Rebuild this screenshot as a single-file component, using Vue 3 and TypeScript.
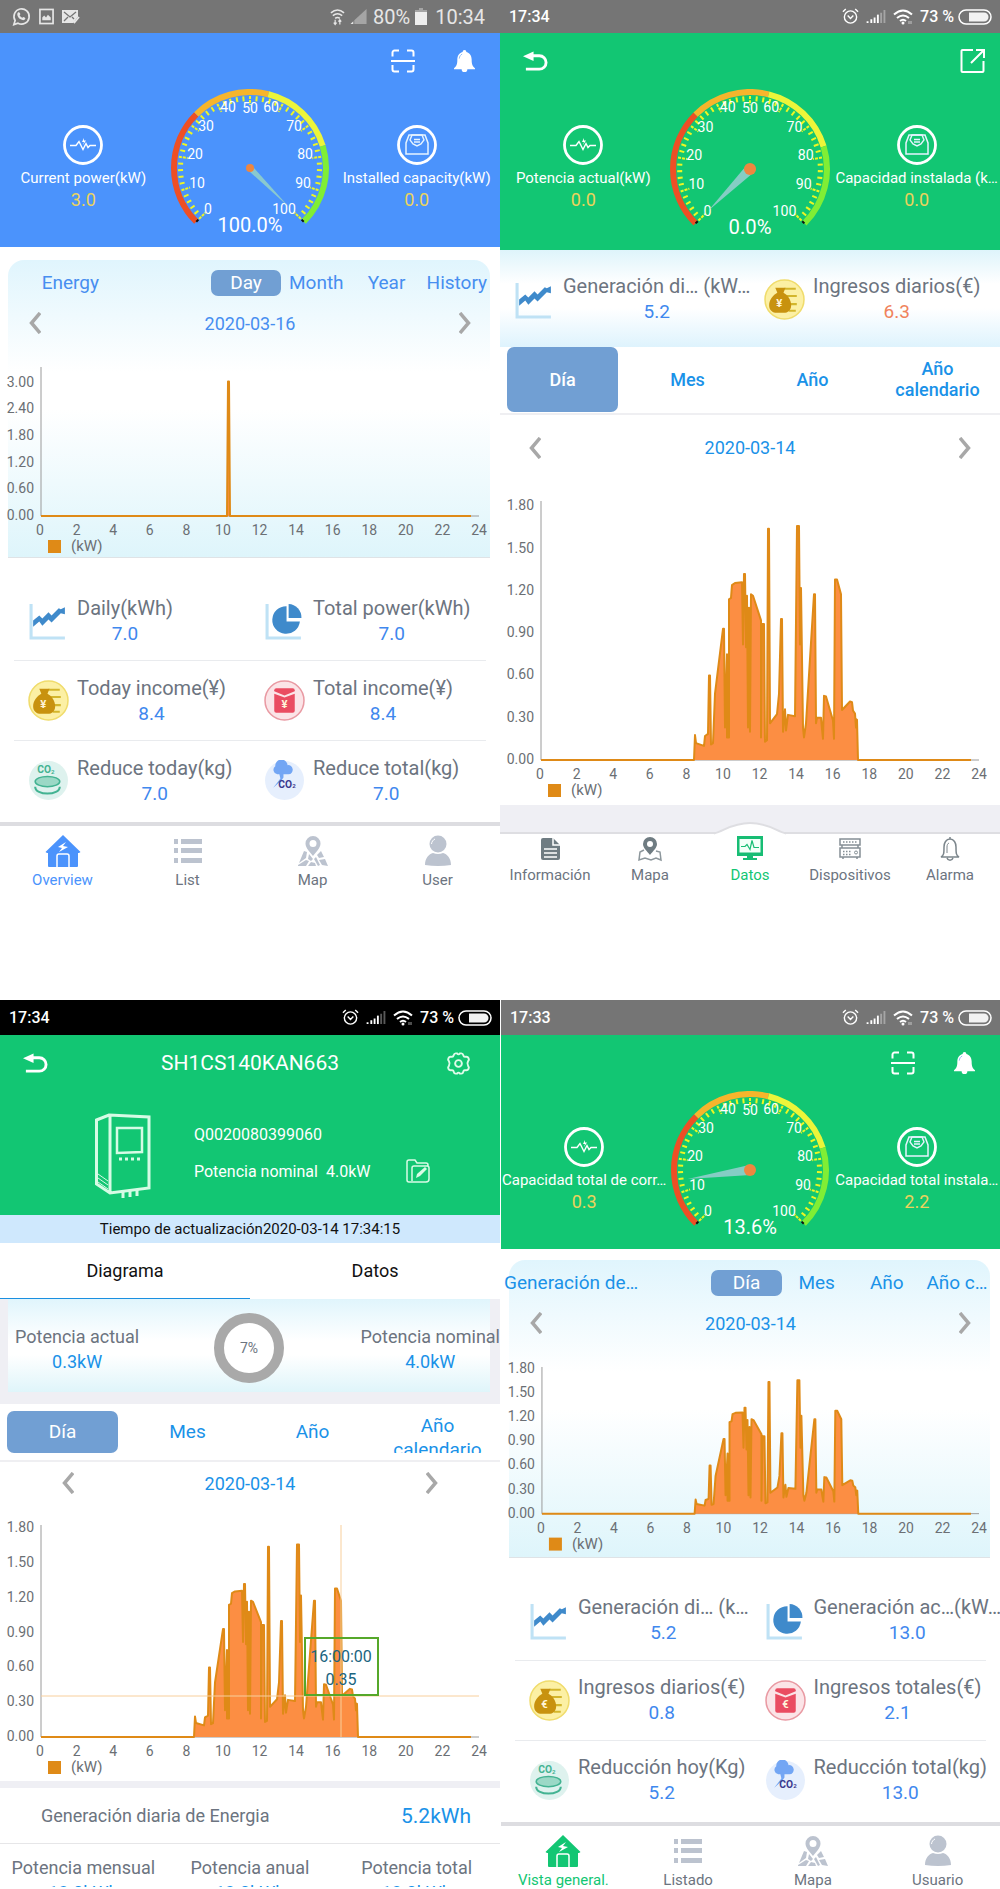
<script setup lang="ts">
interface ChartSpec {
  x: number
  width: number
  height: number
  base: number
  unit: number
  step: number
  digits: string[]
  points: [number, number][]
}
interface Stat { icon: string; sym?: string; label: string; value: string; warm?: boolean }
interface NavItem { icon: string; label: string }
interface GaugeSpec { percent: number; text: string; size: number; hub: number; reach: number }
interface Screen {
  id: string
  kind: 'overview' | 'station' | 'device'
  time: string
  android?: boolean
  gauge?: GaugeSpec
  left?: [string, string]
  right?: [string, string]
  strip?: Stat[]
  energy?: string
  periods: string[]
  date: string
  chart: ChartSpec
  stats?: Stat[]
  nav?: NavItem[]
}

const spike: [number, number][] = [
  [41, 0], [227, 0], [228, 3.03], [229, 3.03], [230, 0], [471, 0],
]
const dayCurve: [number, number][] = [
  [41, 0], [194, 0], [195, 0.177], [196, 0.12], [204, 0.1], [205, 0.17], [208, 0.185], [209, 0.6], [210, 0.6],
  [211, 0.11], [213, 0.12], [215, 0.47], [223, 0.93], [224, 0.93], [225, 0.23], [227, 0.75], [227, 0.16],
  [229, 0.16], [229, 1.14], [231, 1.15], [232, 1.24], [235, 1.255], [242, 1.26], [243, 0.82], [244, 1.32],
  [245, 1.32], [246, 0.8], [247, 1.165], [248, 0.23], [249, 1.08], [250, 0.2], [251, 1.175], [253, 1.165],
  [261, 0.99], [261, 0.16], [262, 0.965], [264, 0.965], [265, 0.13], [267, 0.14], [268, 1.64], [269, 1.64],
  [270, 0.26], [277, 0.325], [279, 0.47], [281, 1.0], [282, 1.0], [283, 0.2], [285, 0.36], [286, 0.21],
  [288, 0.32], [295, 0.31], [297, 1.66], [299, 1.66], [300, 0.82], [301, 1.22], [303, 0.23], [304, 0.16],
  [306, 0.26], [314, 1.175], [315, 1.175], [316, 0.26], [317, 0.3], [321, 0.3], [322, 0.22], [323, 0.15],
  [324, 0.455], [326, 0.45], [333, 0.28], [334, 0.15], [335, 1.28], [337, 1.28], [341, 1.175], [342, 0.355],
  [350, 0.415], [352, 0.41], [353, 0.35], [355, 0.33], [356, 0.23], [356, 0.29], [357, 0.285], [358, 0],
  [471, 0],
]
const dayTicks = ['0.00', '0.30', '0.60', '0.90', '1.20', '1.50', '1.80']

const screens: Screen[] = [
  {
    id: 'blue', kind: 'overview', time: '10:34', android: true,
    gauge: { percent: 100, text: '100.0%', size: 160, hub: 4, reach: 55 },
    left: ['Current power(kW)', '3.0'],
    right: ['Installed capacity(kW)', '0.0'],
    energy: 'Energy',
    periods: ['Day', 'Month', 'Year', 'History'],
    date: '2020-03-16',
    chart: {
      x: 8, width: 482, height: 196, base: 155, unit: 44.4, step: 0.6,
      digits: ['0.00', '0.60', '1.20', '1.80', '2.40', '3.00'], points: spike,
    },
    stats: [
      { icon: 'trend', label: 'Daily(kWh)', value: '7.0' },
      { icon: 'pie', label: 'Total power(kWh)', value: '7.0' },
      { icon: 'bag', sym: '¥', label: 'Today income(¥)', value: '8.4' },
      { icon: 'packet', sym: '¥', label: 'Total income(¥)', value: '8.4' },
      { icon: 'co2day', label: 'Reduce today(kg)', value: '7.0' },
      { icon: 'co2all', label: 'Reduce total(kg)', value: '7.0' },
    ],
    nav: [
      { icon: 'home', label: 'Overview' }, { icon: 'list', label: 'List' },
      { icon: 'map', label: 'Map' }, { icon: 'user', label: 'User' },
    ],
  },
  {
    id: 'station', kind: 'station', time: '17:34',
    gauge: { percent: 0, text: '0.0%', size: 162, hub: 6, reach: 58 },
    left: ['Potencia actual(kW)', '0.0'],
    right: ['Capacidad instalada (k…', '0.0'],
    strip: [
      { icon: 'trend', label: 'Generación di… (kW…', value: '5.2' },
      { icon: 'bag', sym: '¥', label: 'Ingresos diarios(€)', value: '6.3', warm: true },
    ],
    periods: ['Día', 'Mes', 'Año', 'Año calendario'],
    date: '2020-03-14',
    chart: { x: 0, width: 500, height: 310, base: 265, unit: 141, step: 0.3, digits: dayTicks, points: dayCurve },
    nav: [
      { icon: 'doc', label: 'Información' }, { icon: 'pinmap', label: 'Mapa' },
      { icon: 'monitor', label: 'Datos' }, { icon: 'rack', label: 'Dispositivos' },
      { icon: 'belline', label: 'Alarma' },
    ],
  },
  {
    id: 'device', kind: 'device', time: '17:34',
    periods: ['Día', 'Mes', 'Año', 'Año calendario'],
    date: '2020-03-14',
    chart: { x: 0, width: 500, height: 262, base: 218, unit: 116, step: 0.3, digits: dayTicks, points: dayCurve },
  },
  {
    id: 'green', kind: 'overview', time: '17:33',
    gauge: { percent: 13.6, text: '13.6%', size: 160, hub: 6, reach: 63 },
    left: ['Capacidad total de corr…', '0.3'],
    right: ['Capacidad total instala…', '2.2'],
    energy: 'Generación de…',
    periods: ['Día', 'Mes', 'Año', 'Año c…'],
    date: '2020-03-14',
    chart: { x: 8, width: 482, height: 196, base: 153, unit: 80.5, step: 0.3, digits: dayTicks, points: dayCurve },
    stats: [
      { icon: 'trend', label: 'Generación di… (k…', value: '5.2' },
      { icon: 'pie', label: 'Generación ac…(kW…', value: '13.0' },
      { icon: 'bag', sym: '€', label: 'Ingresos diarios(€)', value: '0.8' },
      { icon: 'packet', sym: '€', label: 'Ingresos totales(€)', value: '2.1' },
      { icon: 'co2day', label: 'Reducción hoy(Kg)', value: '5.2' },
      { icon: 'co2all', label: 'Reducción total(kg)', value: '13.0' },
    ],
    nav: [
      { icon: 'home', label: 'Vista general.' }, { icon: 'list', label: 'Listado' },
      { icon: 'map', label: 'Mapa' }, { icon: 'user', label: 'Usuario' },
    ],
  },
]

const hours = Array.from({ length: 13 }, (_, i) => i * 2)
const hourX = (h: number) => 40 + (h * 439) / 24

const curve = (c: ChartSpec) =>
  c.points.map(([x, v], i) => `${i ? 'L' : 'M'}${x} ${c.base - v * c.unit}`).join(' ')

const polar = (r: number, swept: number) => {
  const a = ((225 - swept) * Math.PI) / 180
  return { x: r * Math.cos(a), y: -r * Math.sin(a) }
}
const arc = (from: number, to: number) => {
  const p = polar(76, from)
  const q = polar(76, to)
  return `M${p.x} ${p.y} A76 76 0 0 1 ${q.x} ${q.y}`
}
const bands = [
  { d: arc(0, 90), color: '#ee4f25' },
  { d: arc(90, 149), color: '#f6b52c' },
  { d: arc(149, 208), color: '#ecf53a' },
  { d: arc(208, 270), color: '#80ee35' },
]
const ticks = Array.from({ length: 51 }, (_, i) => {
  const major = i % 5 === 0
  return { major, a: polar(major ? 63 : 67, i * 5.4), b: polar(72, i * 5.4) }
})
const ends = [0, 270].map((s) => ({ a: polar(73, s), b: polar(76, s) }))
const marks: [string, number, number][] = [
  ['0', -42, 41], ['10', -53, 15], ['20', -55, -14], ['30', -44, -42], ['40', -22, -61], ['50', 0, -60],
  ['60', 21, -61], ['70', 44, -42], ['80', 55, -14], ['90', 53, 15], ['100', 34, 41],
]
const needle = (g: GaugeSpec) => {
  const s = g.percent * 2.7
  const tip = polar(g.reach, s)
  const l = polar(g.hub - 1, s - 90)
  const r = polar(g.hub - 1, s + 90)
  return `${l.x},${l.y} ${tip.x},${tip.y} ${r.x},${r.y}`
}
const totals = ['Potencia mensual', 'Potencia anual', 'Potencia total']
</script>

<template>
  <svg class="sprite" aria-hidden="true">
    <symbol id="back" viewBox="0 0 26 20">
      <path d="M0 5 11 0v10z" fill="#fff" />
      <path d="M9 4.500h8a7 7 0 0 1 0 14H3" fill="none" stroke="#fff" stroke-width="3" />
    </symbol>
    <symbol id="scan" viewBox="0 0 24 24">
      <path d="M1.500 7.500V3.500a2 2 0 0 1 2-2H8M16 1.500h4.500a2 2 0 0 1 2 2v4M1.500 16v4.500a2 2 0 0 0 2 2H8M16 22.500h4.500a2 2 0 0 0 2-2V16M0 12h24" fill="none" stroke="#fff" stroke-width="2" />
    </symbol>
    <symbol id="bell" viewBox="0 0 22 24">
      <path d="M11 0a2 2 0 0 1 2 2c4 1 5.500 4.500 5.500 8 0 5 1 7.500 3.500 9v1h-8a3 3 0 0 1-6 0H0v-1c2.500-1.500 3.500-4 3.500-9C3.500 6.500 5 3 9 2a2 2 0 0 1 2-2z" fill="#fff" />
      <path d="M5.500 9c.3-2.500 1.300-4 3-4.700" fill="none" stroke="#8fbdf5" />
    </symbol>
    <symbol id="share" viewBox="0 0 26 26">
      <path d="M13 2H2.500a1 1 0 0 0-1 1v20a1 1 0 0 0 1 1h20a1 1 0 0 0 1-1V13M16 2h8v8M24 2 11 15" fill="none" stroke="#fff" stroke-width="2" />
    </symbol>
    <symbol id="gear" viewBox="0 0 26 26">
      <path d="M10 2.500h1.500Q13 4.500 14.500 2.500H16q1.500 0 2 2 .5 2 2.500 1.500 2-.5 3 1.500.8 1.500-.5 3-1.500 2.500 0 5 1.300 1.500.5 3-1 2-3 1.500-2-.5-2.500 1.500-.5 2-2 2h-1.500Q13 21.500 11.500 23.500H10q-1.500 0-2-2Q7.500 19.500 5.500 20q-2 .5-3-1.500-.8-1.500.5-3 1.500-2.500 0-5-1.300-1.500-.5-3 1-2 3-1.500 2 .5 2.500-1.500.5-2 2-2z" fill="none" stroke="#dffbe9" stroke-width="2" />
      <circle cx="13" cy="13" r="3.500" fill="none" stroke="#dffbe9" stroke-width="2" />
    </symbol>
    <symbol id="pulse" viewBox="0 0 40 40">
      <circle cx="20" cy="20" r="18.500" fill="none" stroke="#fff" stroke-width="2.800" />
      <path d="M7 20.500h6l3-4 4 8 3-6 2 4 2-2h6" fill="none" stroke="#fff" stroke-width="1.400" />
      <path d="m21 13-2 4h2l-1 3 3-4.500h-2z" fill="#fff" />
    </symbol>
    <symbol id="scale" viewBox="0 0 40 40">
      <circle cx="20" cy="20" r="18.500" fill="none" stroke="#fff" stroke-width="2.800" />
      <path d="M12 10h16l3 8v11H9V18z" fill="none" stroke="#e6f4ff" stroke-width="1.500" />
      <path d="M15 10h10l2 5-3 4-4 2-4-2-3-4zM17 14.500h6M17 17h6" fill="none" stroke="#e6f4ff" stroke-width="1.400" />
    </symbol>
    <symbol id="prev" viewBox="0 0 12 22"><path d="M11 1 2.500 11 11 21" fill="none" stroke="#a8a8a8" stroke-width="3.500" /></symbol>
    <symbol id="next" viewBox="0 0 12 22"><path d="M1 1 9.500 11 1 21" fill="none" stroke="#a8a8a8" stroke-width="3.500" /></symbol>
    <symbol id="trend" viewBox="0 0 40 40">
      <path d="M3 4v33h33" fill="none" stroke="#bfe2f5" stroke-width="3" />
      <path d="M5 20l6-5 3 3 6-6 3 3 7-7 2 1 4-2v7l-4-1-9 9-3-3-6 6-3-4-6 5z" fill="#3f8acb" />
    </symbol>
    <symbol id="pie" viewBox="0 0 40 40">
      <path d="M3 4v33h33" fill="none" stroke="#bfe2f5" stroke-width="3" />
      <path d="M22 6v15h13A13.500 13.500 0 1 1 22 6z" fill="#3f8acb" />
      <path d="M24 4a13 13 0 0 1 12.500 13.500H24z" fill="#3f8acb" />
    </symbol>
    <symbol id="bag" viewBox="0 0 40 40">
      <circle cx="20" cy="20" r="19" fill="#fcf0a4" stroke="#f0dc6c" stroke-width="1.500" />
      <path d="M20 9.500h11M22 16.500h10M25 24.500h7M24 31h7" stroke="#d3b62c" stroke-width="2" />
      <path d="M11 8.500h10l-2 5c4 2 7.500 7 7.500 12 0 4.500-3 7.500-7.500 7.500h-6c-5 0-8-3-8-7.500 0-5 4-10 8-12z" fill="#c8920f" />
    </symbol>
    <symbol id="packet" viewBox="0 0 40 40">
      <circle cx="20" cy="20" r="19" fill="#fbe4e7" stroke="#e99aa3" stroke-width="1.500" />
      <path d="M12 8h16a2 2 0 0 1 2 2v1l-10 4-10-4v-1a2 2 0 0 1 2-2z" fill="#ea4c61" />
      <path d="M10 13.500l10 3.500 10-3.500V30a2 2 0 0 1-2 2H12a2 2 0 0 1-2-2z" fill="#ea4c61" />
    </symbol>
    <symbol id="co2day" viewBox="0 0 40 40">
      <circle cx="20" cy="20" r="19" fill="#def2ee" />
      <ellipse cx="19" cy="21" rx="12" ry="5" fill="#9bd8c6" stroke="#43b392" stroke-width="1.500" />
      <path d="M7 26c0 9 24 9 24 0" fill="none" stroke="#43b392" stroke-width="2" />
    </symbol>
    <symbol id="co2all" viewBox="0 0 40 40">
      <circle cx="20" cy="20" r="19" fill="#e6effd" />
      <path d="M13 14a4.500 4.500 0 0 1-2-8 6 6 0 0 1 12-1 4.500 4.500 0 0 1 1 9H19v3l-2 3-8 7 7-9-1-4z" fill="#73a6f4" />
    </symbol>
    <symbol id="home" viewBox="0 0 36 34">
      <path d="M18 1 35.500 18l-1.500 1h-1v13a1 1 0 0 1-1 1H4a1 1 0 0 1-1-1V19H2L.500 18z" fill="currentColor" />
      <path d="M12 33V22q0-2 2-2h8q2 0 2 2v11" fill="none" stroke="#fff" stroke-width="1.500" />
      <path d="m21 8-8 5 4 1-3 4 9-5-5-1z" fill="#fff" />
    </symbol>
    <symbol id="list" viewBox="0 0 36 34">
      <path d="M4 5h4v5H4zM11 5h21v5H11zM4 14h4v5H4zM11 14h21v5H11zM4 24h4v5H4zM11 24h21v5H11z" fill="#bcc3cf" />
    </symbol>
    <symbol id="map" viewBox="0 0 36 34">
      <path d="M18 2a7.500 7.500 0 0 1 7.500 7.500C25.500 14 21 18 18 22c-3-4-7.500-8-7.500-12.500A7.500 7.500 0 0 1 18 2z" fill="#bcc3cf" />
      <circle cx="18" cy="9.500" r="3.500" fill="#fff" />
      <path d="m9 17 3 1-1 6-7 5zM14 20l4 5-2 2-3-2zM3 31l8-5 3 1-3 5H3zM13 32l3-4 4 1 1 3zM26 17l3 6-5 1-2-3zM24 26l6-1 3 7-6-1zM21 23l4 8-2 1-4-7z" fill="#bcc3cf" />
    </symbol>
    <symbol id="user" viewBox="0 0 36 34">
      <circle cx="18" cy="10" r="8.500" fill="#bcc3cf" />
      <path d="M5 31c0-7 4-11 8-12q5 2 10 0c4 1 8 5 8 12q-13 2-26 0z" fill="#bcc3cf" />
      <path d="M11.500 10c.3-2.500 1.500-4 3.500-5" fill="none" stroke="#fff" />
    </symbol>
    <symbol id="doc" viewBox="0 0 28 28">
      <path d="M7 3h10l7 7v13a2 2 0 0 1-2 2H7a2 2 0 0 1-2-2V5a2 2 0 0 1 2-2z" fill="#6f7c82" />
      <path d="M17 3v7h7" fill="none" stroke="#fff" stroke-width="1.500" />
      <path d="M8 14h13M8 18h13M8 22h13" stroke="#fff" stroke-width="1.500" />
    </symbol>
    <symbol id="pinmap" viewBox="0 0 28 28">
      <path d="M14 2a7 7 0 0 1 7 7c0 4-4 7-7 11-3-4-7-7-7-11a7 7 0 0 1 7-7z" fill="#6f7c82" />
      <circle cx="14" cy="9" r="3" fill="#fff" />
      <path d="M8 15l-4 2-1 8 6-2 6 2 5-2 5 2-1-8-4-1" fill="none" stroke="#8d979c" stroke-width="1.500" />
    </symbol>
    <symbol id="monitor" viewBox="0 0 28 28">
      <path d="M1 1h26v20H1z" fill="#17bd74" />
      <path d="M3.500 4h21v13.500h-21z" fill="#f2fff8" />
      <path d="M5 11.500h4l2-2 3 5 2-9 2 7h5" fill="none" stroke="#17bd74" stroke-width="1.200" />
      <path d="M11 21h6v2h4v2H7v-2h4z" fill="#17bd74" />
    </symbol>
    <symbol id="rack" viewBox="0 0 28 28">
      <path d="M4 4h20v6H4zM6 10v3M22 10v3M4 13h20v9H4zM7 22v2M21 22v2" fill="none" stroke="#858f95" stroke-width="1.500" />
      <path d="M7 7h15M7 16.500h9M7 19.500h9" stroke="#858f95" stroke-width="1.500" stroke-dasharray="1.500 1.500" />
      <circle cx="20" cy="17.500" r="1.500" fill="none" stroke="#858f95" />
    </symbol>
    <symbol id="belline" viewBox="0 0 28 28">
      <path d="M5 22c3-1.500 3-4 3-10 0-4 2-8 6-8s6 4 6 8c0 6 0 8.500 3 10zM14 2v2M11 23c1 3 5 3 6 0" fill="none" stroke="#7c868c" stroke-width="1.500" />
      <path d="M11 18v-6c0-2 .7-3.500 2-4" fill="none" stroke="#7c868c" />
    </symbol>
    <symbol id="edit" viewBox="0 0 24 24">
      <path d="M1 21V3q0-2 2-2h6l2 3h9q2 0 2 2v2M6 22V9q0-2 2-2h13q2 0 2 2v11q0 3-3 3H3q-2 0-2-2" fill="none" stroke="#d9fbe6" stroke-width="1.500" />
      <path d="m10 19 1-4 8-7 2 2-7 7z" fill="#d9fbe6" />
    </symbol>
    <symbol id="inverter" viewBox="0 0 56 86">
      <path d="M1.500 7 14 2l40 2v71l-39 5L1.500 71zM15 3v77" fill="none" stroke="#d6fbe5" stroke-width="3" />
      <path d="M22 15h25v24l-25 1z" fill="none" stroke="#d6fbe5" stroke-width="2.500" />
      <path d="M24 46h22" stroke="#d6fbe5" stroke-width="3" stroke-dasharray="3 3" />
      <path d="m3 61 10 7M3 65l10 7M3 69l10 7" stroke="#d6fbe5" />
      <path d="M28 79v6M35 78v6M42 77v6" stroke="#d6fbe5" stroke-width="3" />
    </symbol>
    <symbol id="alarm" viewBox="0 0 18 18">
      <circle cx="9" cy="9.500" r="6.500" fill="none" stroke="#fff" stroke-width="1.500" />
      <path d="m6 8 3 3 3-3M1 4l3-3M17 4l-3-3" fill="none" stroke="#fff" stroke-width="1.500" />
    </symbol>
    <symbol id="bars" viewBox="0 0 20 16">
      <path d="M1 15v-2M5 15v-4M8.500 15V9" stroke="#fff" stroke-width="2" />
      <path d="M12 15V6" stroke="#fff" stroke-width="2" />
      <path d="M15.500 15V4M19 15V1" stroke="#fff" stroke-opacity=".35" stroke-width="2" />
    </symbol>
    <symbol id="wifi" viewBox="0 0 20 16">
      <path d="M1 5.500q9-8 18 0M4 9q6-5 12 0M7 12q3-2.500 6 0" fill="none" stroke="#fff" stroke-width="2" />
      <circle cx="10" cy="14" r="1.500" fill="#fff" />
      <path d="M16 12v3M18 12v3" stroke="#fff" stroke-opacity=".6" />
    </symbol>
    <symbol id="battery" viewBox="0 0 34 16">
      <rect x="1" y="1" width="32" height="14" rx="7" fill="none" stroke="#fff" stroke-width="1.500" />
      <path d="M11 3.500h15a4.500 4.500 0 0 1 0 9H11z" fill="#f2f2f2" />
    </symbol>
    <symbol id="whats" viewBox="0 0 20 20">
      <path d="M2 18.500l1.300-4.300A8 8 0 1 1 6.300 17z" fill="none" stroke="#e6e6e6" stroke-width="1.800" />
      <path d="M6.500 5.500c1.500-.5 2 1 2.300 2l-.8 1.200c.6 1.300 1.500 2 2.800 2.700l1.200-1c1 .3 2.500 1 2 2-1 2-3 1.600-5 .6-2.500-1.500-4.800-5.500-2.500-7.500z" fill="#e6e6e6" />
    </symbol>
    <symbol id="photo" viewBox="0 0 16 18">
      <rect x="1" y="1.500" width="14" height="15" fill="none" stroke="#e6e6e6" stroke-width="1.800" />
      <path d="M3.500 13v-3l2-2 2 2 2-3 3 3v3z" fill="#e6e6e6" />
    </symbol>
    <symbol id="mail" viewBox="0 0 18 14">
      <path d="M0 0h16v7l-5 6H0z" fill="#e6e6e6" />
      <path d="m2 2 6 5 6-5M2 11l4-4M10 7l2 2" fill="none" stroke="#757575" stroke-width="1.300" />
      <path d="m10 10 2.500 2.500L17 7" fill="none" stroke="#e6e6e6" stroke-width="1.800" />
    </symbol>
    <symbol id="wifi2" viewBox="0 0 16 18">
      <path d="M1 4.500q7-6 14 0M3 7.500q5-4 10 0M5.500 10.500q2.500-2 5 0" fill="none" stroke="#e6e6e6" stroke-width="1.700" />
      <path d="M5.500 12v5M4 15l1.500 2L7 15M10.500 17v-5M9 14l1.500-2 1.500 2" fill="none" stroke="#e6e6e6" stroke-width="1.300" />
    </symbol>
    <symbol id="cell" viewBox="0 0 18 18">
      <path d="M17 1v16H4v-4z" fill="#a5a5a5" />
      <path d="M0 17h3v-3z" fill="#e6e6e6" />
    </symbol>
    <symbol id="cellbat" viewBox="0 0 12 17">
      <path d="M4 0h4v2h4v2H0V2h4z" fill="#a5a5a5" />
      <path d="M0 4h12v13H0z" fill="#eee" />
    </symbol>
  </svg>

  <main class="board">
    <article v-for="s in screens" :key="s.id" class="screen" :class="[s.kind, s.id]">
      <div v-if="s.android" class="status android">
        <svg width="19" height="19"><use href="#whats" /></svg>
        <svg width="15" height="17"><use href="#photo" /></svg>
        <svg width="18" height="14"><use href="#mail" /></svg>
        <span class="push"></span>
        <span class="radio">
          <svg width="15" height="18"><use href="#wifi2" /></svg>
          <svg width="18" height="17"><use href="#cell" /></svg>
          <span>80%</span>
          <svg width="12" height="17"><use href="#cellbat" /></svg>
        </span>
        <span>{{ s.time }}</span>
      </div>
      <div v-else class="status">
        <span>{{ s.time }}</span>
        <span class="push"></span>
        <svg width="17" height="17"><use href="#alarm" /></svg>
        <svg width="20" height="15"><use href="#bars" /></svg>
        <svg width="20" height="16"><use href="#wifi" /></svg>
        <span class="charge">73 %<svg width="34" height="16"><use href="#battery" /></svg></span>
      </div>

      <header class="head">
        <div class="topbar">
          <button v-if="s.kind !== 'overview'" type="button" aria-label="Volver"><svg width="25" height="20"><use href="#back" /></svg></button>
          <h1 v-if="s.kind === 'device'">SH1CS140KAN663</h1>
          <span v-else class="push"></span>
          <template v-if="s.kind === 'overview'">
            <button type="button" aria-label="Scan"><svg width="24" height="24"><use href="#scan" /></svg></button>
            <button type="button" aria-label="Alerts"><svg width="21" height="23"><use href="#bell" /></svg></button>
          </template>
          <button v-else-if="s.kind === 'station'" type="button" aria-label="Compartir"><svg width="26" height="26"><use href="#share" /></svg></button>
          <button v-else type="button" aria-label="Ajustes"><svg width="25" height="25"><use href="#gear" /></svg></button>
        </div>

        <div v-if="s.gauge && s.left && s.right" class="meters">
          <div class="meter">
            <svg width="40" height="40"><use href="#pulse" /></svg>
            <span class="mlabel">{{ s.left[0] }}</span>
            <span class="mvalue">{{ s.left[1] }}</span>
          </div>
          <svg class="gauge" viewBox="-80 -79 160 148" :width="s.gauge.size">
            <path v-for="b in bands" :key="b.color" :d="b.d" :stroke="b.color" fill="none" stroke-width="6" />
            <line
              v-for="(t, i) in ticks" :key="i" :x1="t.b.x" :y1="t.b.y" :x2="t.a.x" :y2="t.a.y"
              stroke="#eef722" stroke-width="2" :stroke-dasharray="t.major ? '3 1' : undefined"
            />
            <line v-for="(e, i) in ends" :key="'e' + i" :x1="e.a.x" :y1="e.a.y" :x2="e.b.x" :y2="e.b.y" stroke="#111" stroke-width="2" />
            <text v-for="m in marks" :key="m[0]" :x="m[1]" :y="m[2] + 5" class="mark">{{ m[0] }}</text>
            <polygon :points="needle(s.gauge)" fill="#8fcdcb" fill-opacity=".92" />
            <circle :r="s.gauge.hub" fill="#ee8640" />
            <text x="0" y="64" class="percent">{{ s.gauge.text }}</text>
          </svg>
          <div class="meter">
            <svg width="40" height="40"><use href="#scale" /></svg>
            <span class="mlabel">{{ s.right[0] }}</span>
            <span class="mvalue">{{ s.right[1] }}</span>
          </div>
        </div>

        <div v-else class="unit">
          <svg width="56" height="86"><use href="#inverter" /></svg>
          <div class="unit-text">
            <p>Q0020080399060</p>
            <p><span>Potencia nominal</span><span>4.0kW</span></p>
          </div>
          <button type="button" aria-label="Editar"><svg width="24" height="24"><use href="#edit" /></svg></button>
        </div>
      </header>

      <template v-if="s.kind === 'device'">
        <p class="updated">Tiempo de actualización2020-03-14 17:34:15</p>
        <div class="views">
          <button type="button" class="on">Diagrama</button>
          <button type="button">Datos</button>
        </div>
        <div class="power">
          <div class="power-card">
            <div class="pair"><span>Potencia actual</span><b>0.3kW</b></div>
            <div class="ring">7%</div>
            <div class="pair last"><span>Potencia nominal</span><b>4.0kW</b></div>
          </div>
        </div>
      </template>

      <div v-if="s.strip" class="strip">
        <div v-for="t in s.strip" :key="t.label" class="stat">
          <svg width="41" height="41" viewBox="0 0 40 40">
            <use :href="'#' + t.icon" />
            <text v-if="t.sym" x="15" y="27" class="sym">{{ t.sym }}</text>
          </svg>
          <div class="stat-text"><span>{{ t.label }}</span><b :class="{ warm: t.warm }">{{ t.value }}</b></div>
        </div>
      </div>

      <div v-if="s.kind !== 'overview'" class="wide-tabs">
        <button v-for="(p, i) in s.periods" :key="p" type="button" :class="{ on: i === 0 }"><span>{{ p }}</span></button>
      </div>

      <section class="chart">
        <div v-if="s.energy" class="tabs">
          <h2>{{ s.energy }}</h2>
          <button v-for="(p, i) in s.periods" :key="p" type="button" :class="{ on: i === 0 }">{{ p }}</button>
        </div>
        <div class="date">
          <button type="button" aria-label="Previous"><svg width="12" height="22"><use href="#prev" /></svg></button>
          <span>{{ s.date }}</span>
          <button type="button" aria-label="Next"><svg width="12" height="22"><use href="#next" /></svg></button>
        </div>
        <svg class="plot" :viewBox="`${s.chart.x} 0 ${s.chart.width} ${s.chart.height}`">
          <text v-for="(d, i) in s.chart.digits" :key="d" x="34" :y="s.chart.base + 4 - i * s.chart.step * s.chart.unit" text-anchor="end">{{ d }}</text>
          <text v-for="h in hours" :key="h" :x="hourX(h)" :y="s.chart.base + 19" text-anchor="middle">{{ h }}</text>
          <path :d="`M41 6V${s.chart.base}H479`" fill="none" stroke="#9a9a9a" />
          <path :d="curve(s.chart)" fill="#fc8e43" stroke="#df8a17" stroke-width="2" stroke-linejoin="round" />
          <template v-if="s.kind === 'device'">
            <path :d="`M41 ${s.chart.base - 41}H479M341 6V${s.chart.base}`" stroke="#f8cf9c" fill="none" />
            <rect x="305" :y="s.chart.base - 99" width="73" height="57" fill="none" stroke="#56a82a" stroke-width="2" />
            <text x="341" :y="s.chart.base - 75" class="tip">16:00:00</text>
            <text x="341" :y="s.chart.base - 52" class="tip">0.35</text>
          </template>
          <rect x="48" :y="s.chart.base + 24" width="13" height="13" fill="#df8a17" />
          <text x="71" :y="s.chart.base + 35" class="legend">(kW)</text>
        </svg>
      </section>

      <div v-if="s.stats" class="stats">
        <div v-for="t in s.stats" :key="t.label" class="stat">
          <svg width="41" height="41" viewBox="0 0 40 40">
            <use :href="'#' + t.icon" />
            <text v-if="t.sym" :x="t.icon === 'bag' ? 15 : 20" y="27" class="sym">{{ t.sym }}</text>
            <text v-if="t.icon === 'co2day'" x="9" y="13" class="gas">CO<tspan class="sub" dy="1">2</tspan></text>
            <text v-if="t.icon === 'co2all'" x="14" y="27" class="gas deep">CO<tspan class="sub">2</tspan></text>
          </svg>
          <div class="stat-text"><span>{{ t.label }}</span><b>{{ t.value }}</b></div>
        </div>
      </div>

      <template v-if="s.kind === 'device'">
        <div class="daily"><span>Generación diaria de Energia</span><b>5.2kWh</b></div>
        <div class="totals">
          <div v-for="t in totals" :key="t"><span>{{ t }}</span><b>13.0kWh</b></div>
        </div>
      </template>

      <nav v-if="s.nav" class="nav">
        <svg v-if="s.kind === 'station'" class="bump" width="72" height="13" viewBox="0 0 72 13">
          <path d="M0 11.500C10 9 18 1 36 1s26 8 36 10.500V13H0z" fill="#fff" />
          <path d="M0 11.500C10 9 18 1 36 1s26 8 36 10.500" fill="none" stroke="#dedee2" stroke-width="2" />
        </svg>
        <a v-for="(n, i) in s.nav" :key="n.label" href="#" :class="{ on: s.kind === 'station' ? i === 2 : i === 0 }">
          <svg><use :href="'#' + n.icon" /></svg>
          <span>{{ n.label }}</span>
        </a>
      </nav>
    </article>
  </main>
</template>

<style>
body {
  background: #fff;
}
</style>

<style scoped>
.sprite {
  position: absolute;
  width: 0;
  height: 0;
}
.board {
  display: grid;
  grid-template-columns: 1fr 1fr;
  row-gap: 111px;
  align-items: start;
  font-family: Roboto, 'Liberation Sans', sans-serif;
  color: #6c7480;
}
.screen {
  --accent: #1a92e8;
  --brand: #12c673;
  min-width: 0;
  overflow: hidden;
}
.blue {
  --accent: #478ef0;
  --brand: #4b93fc;
}
.green {
  padding-left: 1px;
}
button {
  border: 0;
  padding: 0;
  margin: 0;
  background: none;
  font: inherit;
  color: inherit;
}
svg {
  display: block;
  flex: none;
}
p,
h1,
h2 {
  margin: 0;
  font-weight: 400;
}
b {
  font-weight: 400;
}
.push {
  flex: 1;
}

/* status bar */
.status {
  display: flex;
  align-items: center;
  gap: 7px;
  height: 33px;
  padding: 0 8px 0 9px;
  background: #757575;
  color: #fff;
  font-size: 16px;
  font-weight: 500;
}
.charge {
  display: flex;
  align-items: center;
  gap: 4px;
}
.green .status,
.device .status {
  height: 35px;
}
.device .status {
  background: #000;
}
.status.android {
  gap: 8px;
  padding: 0 15px 0 12px;
  color: #e6e6e6;
  font-size: 20px;
  font-weight: 400;
}
.radio {
  display: flex;
  align-items: center;
  gap: 5px;
}

/* coloured header */
.head {
  background: var(--brand);
  color: #fff;
  padding-bottom: 10px;
}
.station .head {
  padding-bottom: 11px;
}
.topbar {
  display: flex;
  align-items: center;
  height: 56px;
  padding: 0 25px 0 23px;
  gap: 39px;
}
.station .topbar {
  padding-right: 14px;
}
.device .topbar {
  padding-right: 29px;
}
.topbar h1 {
  flex: 1;
  padding-left: 6px;
  text-align: center;
  font-size: 21px;
}
.meters {
  display: grid;
  grid-template-columns: 1fr 1fr 1fr;
  justify-items: center;
}
.meter {
  display: flex;
  flex-direction: column;
  align-items: center;
  padding-top: 36px;
  white-space: nowrap;
  width: 100%;
  min-width: 0;
}
.mlabel {
  margin-top: 3px;
  font-size: 15px;
  line-height: 20px;
}
.mvalue {
  color: #ecd35c;
  font-size: 18px;
  line-height: 24px;
}
.mark {
  fill: #fff;
  font-size: 14px;
  text-anchor: middle;
}
.percent {
  fill: #fff;
  font-size: 20px;
  text-anchor: middle;
}
.unit {
  display: flex;
  align-items: flex-start;
  padding: 22px 70px 6px 95px;
}
.unit-text {
  flex: 1;
  padding-left: 43px;
  padding-top: 3px;
  font-size: 16px;
}
.unit-text p {
  display: flex;
  gap: 8px;
  line-height: 37px;
}
.unit button {
  margin-top: 46px;
}

/* device screen */
.updated {
  background: #cfe8fd;
  color: #111;
  text-align: center;
  font-size: 15px;
  line-height: 28px;
}
.views {
  display: grid;
  grid-template-columns: 1fr 1fr;
  color: #111;
  font-size: 18px;
}
.views button {
  height: 56px;
  border-bottom: 1px solid transparent;
}
.views .on {
  border-color: #1a8fe0;
}
.power {
  background: #efeff4;
  padding: 0 10px 12px 8px;
}
.power-card {
  display: grid;
  grid-template-columns: 1fr 70px 1fr;
  align-items: center;
  height: 93px;
  background: linear-gradient(#e0f5fc, #fff 45%, #fff 60%, #dff5fa);
  font-size: 18px;
}
.pair {
  display: flex;
  flex-direction: column;
  align-items: center;
  justify-self: start;
  padding-left: 7px;
  line-height: 25px;
  margin-top: 7px;
}
.pair b {
  color: var(--accent);
}
.pair.last {
  justify-self: end;
  margin-right: -10px;
  white-space: nowrap;
}
.ring {
  box-sizing: border-box;
  width: 70px;
  height: 70px;
  margin-top: 4px;
  border: 10px solid #a9a9a9;
  border-radius: 50%;
  background: #fff;
  text-align: center;
  font-size: 14px;
  line-height: 50px;
}

/* stats */
.strip {
  display: grid;
  grid-template-columns: 1fr 1fr;
  padding: 10px 0 8px;
  background: linear-gradient(#def4fb, #fff 35%, #fff 60%, #def3fd);
}
.stats {
  display: grid;
  grid-template-columns: 1fr 1fr;
  margin: 23px 14px 2px;
}
.stat {
  display: flex;
  align-items: center;
  gap: 8px;
  height: 79px;
  padding-left: 14px;
  white-space: nowrap;
  min-width: 0;
}
.stats .stat {
  border-bottom: 1px solid #e9ebee;
}
.stats .stat:nth-last-child(-n + 2) {
  border-bottom: 0;
}
.stat-text {
  display: flex;
  flex-direction: column;
  align-items: center;
  font-size: 20px;
  line-height: 26px;
}
.stat-text b {
  color: #3f88ee;
  font-size: 19px;
}
.stat-text .warm {
  color: #f0835c;
}
.sym {
  fill: #fff3d8;
  font-size: 11px;
  font-weight: 700;
  text-anchor: middle;
}
.gas {
  fill: #43b392;
  font-size: 10px;
  font-weight: 700;
}
.gas.deep {
  fill: #3b3a8f;
}
.sub {
  font-size: 6px;
}

/* period tabs */
.wide-tabs {
  display: grid;
  grid-template-columns: repeat(4, 1fr);
  padding-bottom: 1px;
  border-bottom: 2px solid #efeff2;
  color: var(--accent);
  font-size: 18px;
  line-height: 21px;
}
.wide-tabs button {
  height: 65px;
  margin: 0 7px;
  font-weight: 500;
}
.wide-tabs .on,
.tabs .on {
  background: #719fd3;
  color: #fff;
  border-radius: 7px;
}
.device .wide-tabs {
  padding: 7px 0;
  font-size: 19px;
  line-height: 24px;
}
.device .wide-tabs button {
  display: flex;
  align-items: center;
  justify-content: center;
  height: 42px;
  overflow: hidden;
  font-weight: 400;
}
.device .wide-tabs span {
  max-height: 36px;
}

/* chart */
.chart {
  color: var(--accent);
}
.overview .chart {
  margin: 13px 10px 0 8px;
  padding-top: 10px;
  border-radius: 16px 16px 0 0;
  border-bottom: 1px solid #dfe3e6;
  background: linear-gradient(#e0f5fd, #fff 38%, #fff 50%, #def5fb);
}
.green .chart {
  margin-top: 11px;
}
.tabs {
  display: grid;
  grid-template-columns: repeat(7, 1fr);
  margin: 0 -2px 0 -8px;
  font-size: 19px;
  line-height: 26px;
  white-space: nowrap;
}
.tabs h2 {
  grid-column: span 2;
  font-size: 19px;
  display: flex;
  justify-content: center;
}
.tabs h2 + button {
  grid-column: 4;
}
.tabs button {
  min-width: 0;
}
.date {
  display: flex;
  align-items: center;
  justify-content: space-between;
  height: 54px;
  margin-bottom: 11px;
  padding: 0 19px 0 21px;
  font-size: 18px;
}
.station .date {
  height: 66px;
  margin-bottom: 14px;
  padding: 0 29px;
}
.device .date {
  height: 42px;
  margin-bottom: 15px;
  padding: 0 62px;
}
.plot {
  width: 100%;
  height: auto;
  overflow: visible;
}
.plot text {
  fill: #6b6f74;
  font-size: 14px;
}
.plot .legend {
  font-size: 15px;
}
.plot .tip {
  fill: #1b6580;
  font-size: 16px;
  text-anchor: middle;
}

/* device totals */
.daily {
  display: flex;
  align-items: center;
  justify-content: space-between;
  height: 55px;
  padding: 0 29px 0 41px;
  border-top: 7px solid #efeff4;
  border-bottom: 1px solid #e6e6e8;
  font-size: 18px;
}
.daily b {
  color: var(--accent);
  font-size: 21px;
}
.totals {
  display: grid;
  grid-template-columns: 1fr 1fr 1fr;
  max-height: 43px;
  overflow: hidden;
  font-size: 18px;
  text-align: center;
}
.totals div {
  display: flex;
  flex-direction: column;
  padding-top: 11px;
  line-height: 25px;
}
.totals b {
  color: var(--accent);
}

/* bottom navigation */
.nav {
  display: flex;
  border-top: 4px solid #dddde1;
  position: relative;
}
.nav a {
  flex: 1;
  display: flex;
  flex-direction: column;
  align-items: center;
  padding-top: 8px;
  color: #6c7480;
  font-size: 15px;
  line-height: 18px;
  text-decoration: none;
  white-space: nowrap;
}
.nav svg {
  width: 36px;
  height: 34px;
  margin-bottom: 3px;
}
.nav .on {
  color: var(--brand);
}
.station .nav {
  margin-top: 27px;
  border-top: 2px solid #dedee2;
  box-shadow: 0 -27px 0 #efeff4;
}
.station .nav a {
  padding-top: 0;
}
.station .nav a svg {
  width: 28px;
  height: 28px;
  margin: 1px 0 3px;
}
.station .nav .bump {
  position: absolute;
  left: calc(50% - 36px);
  top: -12px;
  width: 72px;
  height: 13px;
}
</style>
